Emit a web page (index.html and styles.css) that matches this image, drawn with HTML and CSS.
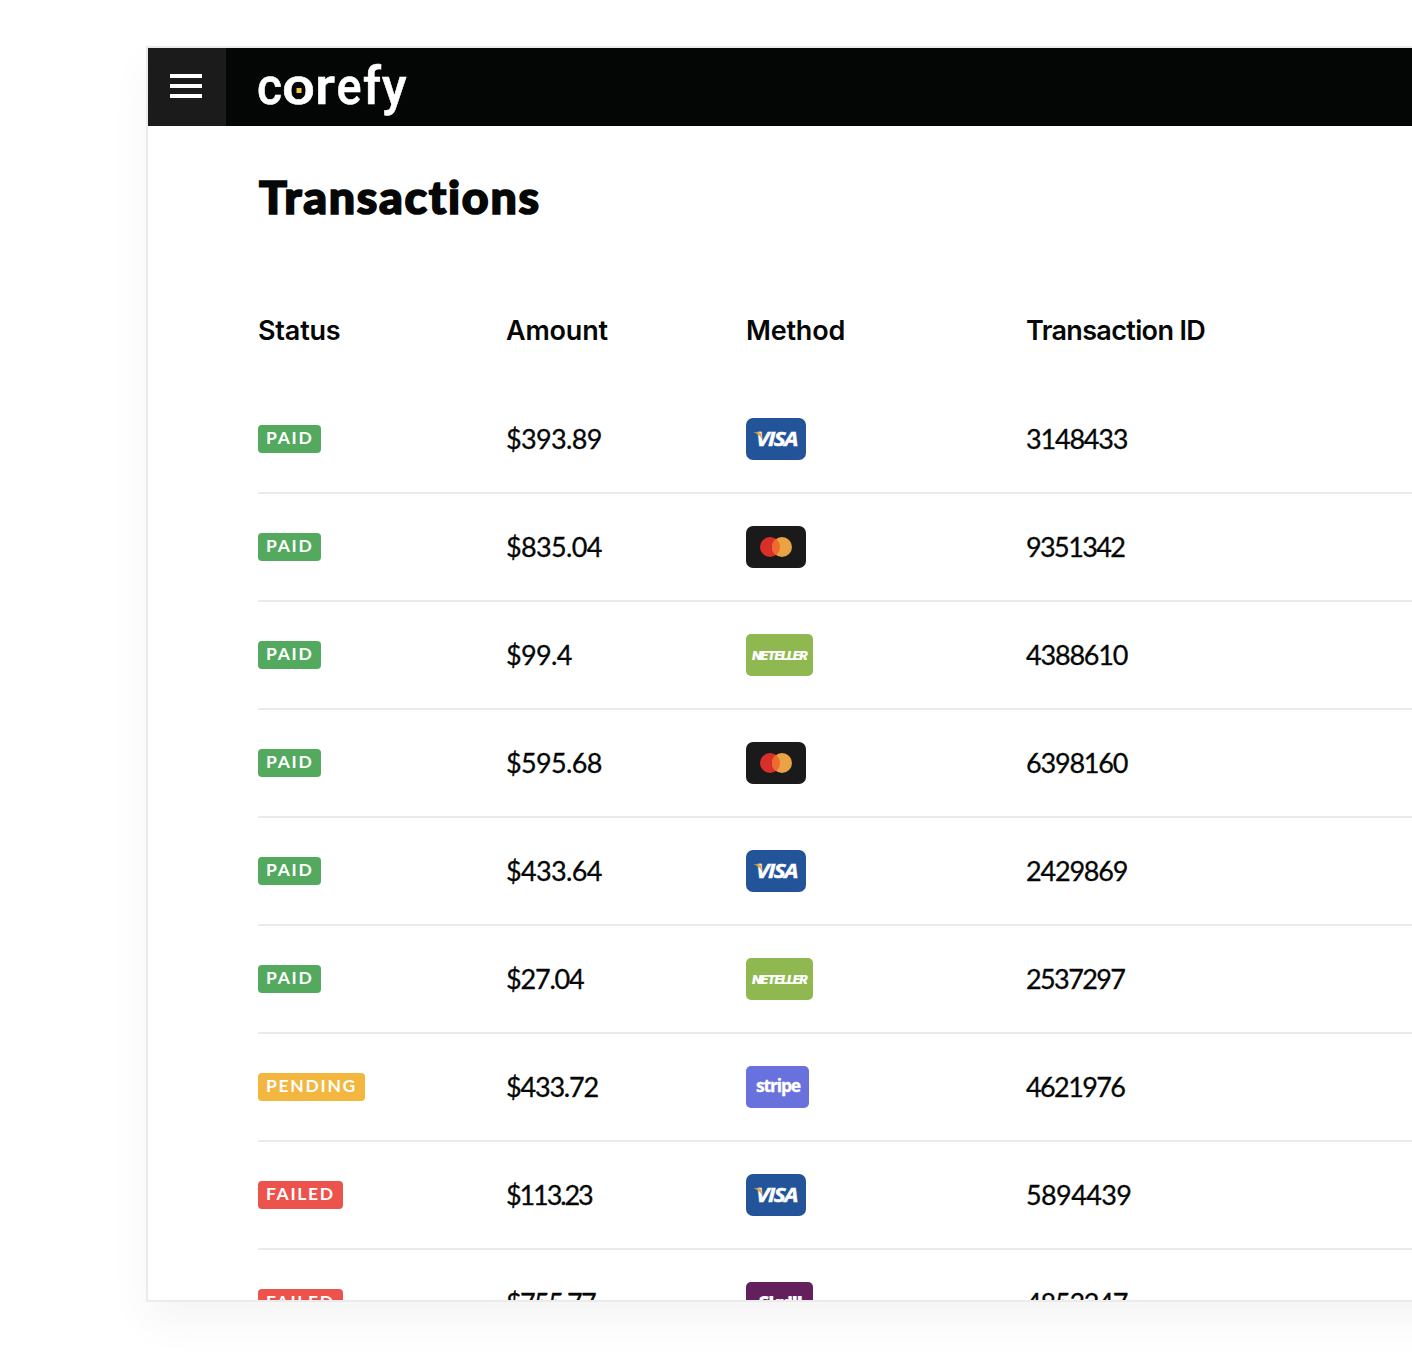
FILE: index.html
```html
<!DOCTYPE html>
<html lang="en">
<head>
<meta charset="utf-8">
<title>Transactions</title>
<link rel="stylesheet" href="styles.css">
</head>
<body>
<svg class="sprite" aria-hidden="true">
  <symbol id="visa" viewBox="0 0 60 42">
    <rect width="60" height="42" rx="7" fill="#235499"/>
    <text class="brand visa-text" x="10" y="28" textLength="41" lengthAdjust="spacingAndGlyphs">VISA</text>
    <path d="M7.500 14.300h5.500q2 0 2.300 2l.8 5q-2.500-5-8.600-7z" fill="#e9a53b"/>
  </symbol>
  <symbol id="mastercard" viewBox="0 0 60 42">
    <rect width="60" height="42" rx="7" fill="#1a1a1a"/>
    <circle cx="24" cy="21" r="10" fill="#d92f2b"/>
    <circle cx="36" cy="21" r="10" fill="#e9a344"/>
    <path d="M30 13a10 10 0 0 1 0 16a10 10 0 0 1 0-16z" fill="#ee6a2f"/>
  </symbol>
  <symbol id="neteller" viewBox="0 0 67 42">
    <rect width="67" height="42" rx="5" fill="#8fb950"/>
    <text class="brand neteller-text" x="6" y="26" textLength="54.500" lengthAdjust="spacingAndGlyphs">NETELLER</text>
  </symbol>
  <symbol id="stripe" viewBox="0 0 63 42">
    <rect width="63" height="42" rx="5" fill="#6972dc"/>
    <text class="brand stripe-text" x="10" y="26" textLength="44" lengthAdjust="spacingAndGlyphs">stripe</text>
  </symbol>
  <symbol id="skrill" viewBox="0 0 67 42">
    <rect width="67" height="42" rx="5" fill="#63205d"/>
    <text class="brand skrill-text" x="12.500" y="27" textLength="43" lengthAdjust="spacingAndGlyphs">Skrill</text>
  </symbol>
</svg>
<div class="window">
  <header class="topbar">
    <button class="menu" aria-label="Menu"><span></span><span></span><span></span></button>
    <svg class="logo" width="160" height="78" viewBox="0 0 160 78" role="img" aria-label="corefy">
      <text class="wordmark" y="56"><tspan x="-1" textLength="25" lengthAdjust="spacingAndGlyphs">c</tspan><tspan x="24" textLength="33" lengthAdjust="spacingAndGlyphs">o</tspan><tspan x="57" textLength="20" lengthAdjust="spacingAndGlyphs">r</tspan><tspan x="78.500" textLength="25" lengthAdjust="spacingAndGlyphs">e</tspan><tspan x="105" textLength="18" lengthAdjust="spacingAndGlyphs">f</tspan><tspan x="124" textLength="24.500" lengthAdjust="spacingAndGlyphs">y</tspan></text>
      <rect x="38.500" y="40" width="5" height="5" fill="#f6c73c"/>
    </svg>
  </header>
  <main class="content">
    <h1>Transactions</h1>
    <div class="row head"><span class="label">Status</span><span class="label">Amount</span><span class="label">Method</span><span>Transaction ID</span></div>
    <div class="row"><span><b class="badge paid">PAID</b></span><span class="amount">$393.89</span><svg class="m60"><use href="#visa"/></svg><span>3148433</span></div>
    <div class="row"><span><b class="badge paid">PAID</b></span><span class="amount">$835.04</span><svg class="m60"><use href="#mastercard"/></svg><span class="tight">9351342</span></div>
    <div class="row"><span><b class="badge paid">PAID</b></span><span class="amount">$99.4</span><svg class="m67"><use href="#neteller"/></svg><span>4388610</span></div>
    <div class="row"><span><b class="badge paid">PAID</b></span><span class="amount">$595.68</span><svg class="m60"><use href="#mastercard"/></svg><span>6398160</span></div>
    <div class="row"><span><b class="badge paid">PAID</b></span><span class="amount">$433.64</span><svg class="m60"><use href="#visa"/></svg><span>2429869</span></div>
    <div class="row"><span><b class="badge paid">PAID</b></span><span>$27.04</span><svg class="m67"><use href="#neteller"/></svg><span class="tight">2537297</span></div>
    <div class="row"><span><b class="badge pending">PENDING</b></span><span>$433.72</span><svg class="m63"><use href="#stripe"/></svg><span class="tight">4621976</span></div>
    <div class="row"><span><b class="badge failed">FAILED</b></span><span class="narrow">$113.23</span><svg class="m60"><use href="#visa"/></svg><span class="wide">5894439</span></div>
    <div class="row"><span><b class="badge failed">FAILED</b></span><span class="tight">$755.77</span><svg class="m67"><use href="#skrill"/></svg><span>4853247</span></div>
  </main>
</div>
</body>
</html>
```
FILE: styles.css
```css
* { box-sizing: border-box; }
body {
  margin: 0;
  height: 1372px;
  padding: 46px 0 0 146px;
  overflow: hidden;
  background: #fff;
  color: #060807;
  font-family: Lato, sans-serif;
}
.sprite { display: none; }
.window {
  height: 1256px;
  margin-right: -80px;
  border: 2px solid #ebebeb;
  background: #fff;
  box-shadow: 0 20px 40px rgba(0, 0, 0, .045);
  overflow: hidden;
}
.topbar { display: flex; height: 78px; background: #040605; }
.menu {
  display: flex;
  flex-direction: column;
  gap: 6px;
  width: 78px;
  padding: 26px 22px;
  border: 0;
  background: #1b1b1b;
}
.menu span { width: 32px; height: 4px; background: #fff; }
.logo { margin-left: 32px; overflow: visible; }
.wordmark { font: 500 52px Roboto, sans-serif; fill: #fff; stroke: #fff; stroke-width: .6px; }
.content { padding: 40px 0 0 110px; }
h1 {
  margin: 0 0 0 1px;
  height: 60px;
  font-size: 46.500px;
  line-height: 60px;
  font-weight: 900;
  letter-spacing: 1.700px;
  -webkit-text-stroke: 1.700px currentColor;
}
.row {
  display: grid;
  grid-template-columns: 248px 240px 280px 1fr;
  align-items: center;
  height: 108px;
  border-bottom: 2px solid #ebebeb;
  font-size: 27px;
  letter-spacing: -1.200px;
}
.row > span {
  padding-bottom: 2px;
  white-space: nowrap;
  -webkit-text-stroke: .3px currentColor;
}
.row > span:first-child { padding-bottom: 0; }
.row.head {
  margin-top: 52px;
  padding-bottom: 4px;
  border: 0;
  font: 600 27px Inter, sans-serif;
  letter-spacing: -.65px;
}
.row.head > span { padding-bottom: 0; -webkit-text-stroke: 0; }
.row.head > .label { letter-spacing: -.2px; }
.row > .amount { letter-spacing: -.65px; }
.row > .tight { letter-spacing: -1.600px; }
.row > .narrow { letter-spacing: -2.100px; }
.row > .wide { letter-spacing: -.6px; }
.badge {
  display: block;
  height: 28px;
  padding-left: 8px;
  border-radius: 4px;
  color: #fff;
  font-size: 17.500px;
  line-height: 26px;
  font-weight: 700;
  letter-spacing: 1.700px;
  -webkit-text-stroke: 0;
}
.paid { width: 63px; background: #53aa5f; }
.pending { width: 107px; background: #f3b63f; }
.failed { width: 85px; background: #ec534d; }
.m60 { width: 60px; height: 42px; }
.m63 { width: 63px; height: 42px; }
.m67 { width: 67px; height: 42px; }
.brand { fill: #fff; font-family: "Open Sans", sans-serif; font-weight: 800; }
.visa-text { font-size: 19px; font-style: italic; font-weight: 700; stroke: #fff; stroke-width: .4px; }
.neteller-text { font-family: Inter, sans-serif; font-size: 11.500px; font-style: italic; font-weight: 900; }
.stripe-text { font-size: 18px; font-weight: 700; stroke: #fff; stroke-width: .3px; }
.skrill-text { font-size: 18px; }
```
